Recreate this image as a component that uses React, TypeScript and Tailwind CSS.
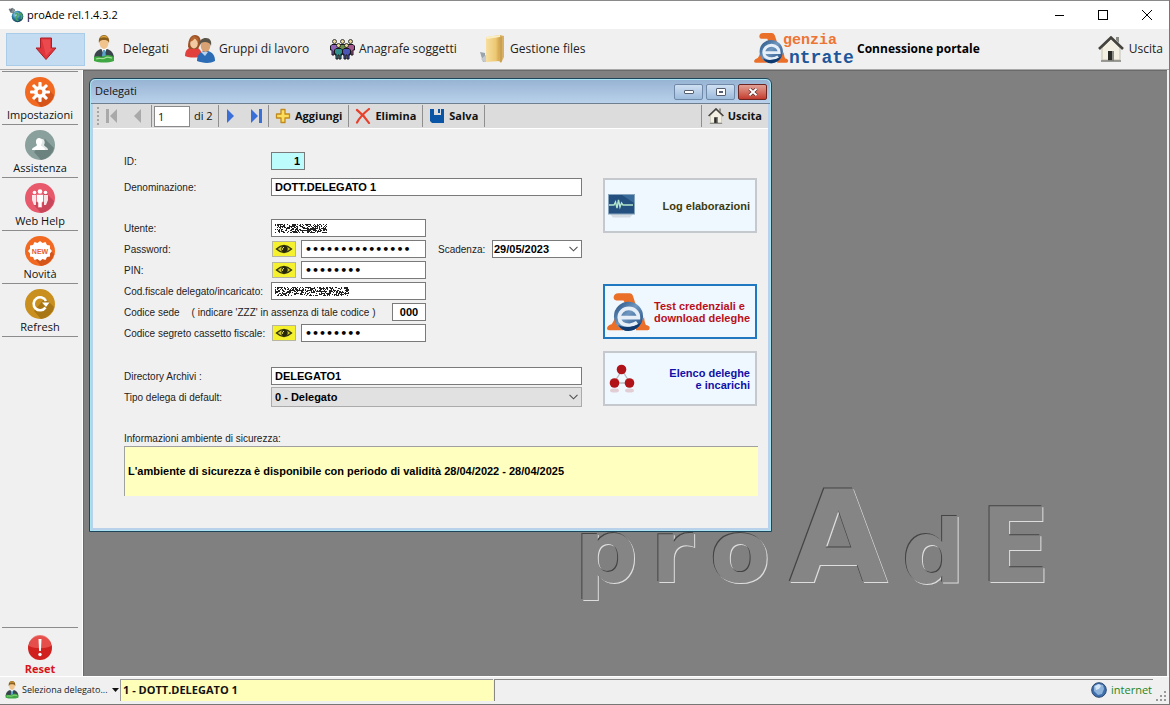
import type { ReactNode } from "react";

/* ---------- icons ---------- */

function GlobeIcon() {
  return (
    <svg viewBox="0 0 16 16" className="size-4">
      <defs>
        <radialGradient id="globe" cx="0.4" cy="0.35" r="0.7">
          <stop offset="0" stopColor="#bfe8f5" />
          <stop offset="0.5" stopColor="#2a7fa8" />
          <stop offset="1" stopColor="#123a4c" />
        </radialGradient>
      </defs>
      <circle cx="9.500" cy="9.500" r="5.800" fill="url(#globe)" />
      <path d="M7 7c2-1 3 0 3 1s-2 1-2 3 2 2 2 3M12 6l2 3-1 3" stroke="#49a35c" strokeWidth="1.600" fill="none" />
      <path d="M1 2h3v2H2zM4 1l3 2-2 3-3-1z" fill="#8c9aa0" stroke="#3e4a50" strokeWidth=".5" />
    </svg>
  );
}

function RedArrowIcon() {
  return (
    <svg viewBox="0 0 22 24" className="h-6 w-[22px]">
      <path d="M5.500 1h11v10H21L11 22.500 1 11h4.500z" fill="#e0353b" stroke="#a82028" strokeWidth="1" />
      <path d="M7 2.500h8v9h2.500L11 19z" fill="#f0595c" opacity=".6" />
    </svg>
  );
}

function DelegateIcon({ className }: { className: string }) {
  return (
    <svg viewBox="0 0 22 28" className={className}>
      <path d="M1 24c0-6 3-9 7-10h6c4 1 7 4 7 10l-3 2H4z" fill="#39444c" />
      <path d="M8 13l3 7 3-7z" fill="#fff" />
      <path d="M10 15h2l1 6-2 2-2-2z" fill="#56a5cf" />
      <path d="M6.500 7c0-4 9-4 9 0 0 4-2 7-4.500 7S6.500 11 6.500 7z" fill="#f1c48d" />
      <path d="M6 8c-1-5 2-8 5-8s6 3 5 8c-1-3-3-3-5-3s-4 0-5 3z" fill="#8a5e1c" />
      <path d="M7 3c2-3 6-3 8 0-3-1-5-1-8 0z" fill="#e0a93c" />
      <path d="M1 22c4-2 7 1 10-1s7-1 10 1v4c-6 2-14 2-20 0z" fill="#3fa842" />
      <path d="M3 24c4-2 6 1 9-1s5 0 7 0" stroke="#a5e09b" strokeWidth="1.200" fill="none" />
    </svg>
  );
}

function GroupIcon() {
  return (
    <svg viewBox="0 0 30 28" className="h-7 w-[30px]">
      <path d="M0 21c0-6 3-8 7-9h4c3 1 6 4 6 9-5 2-12 2-17 0z" fill="#e2413b" />
      <path d="M3 12c0-8 3-12 7-12s7 4 5 10l-2 4H5z" fill="#9a5227" />
      <ellipse cx="9" cy="8.500" rx="3.800" ry="5" fill="#f3c9a1" />
      <path d="M5 7c2-1 4-2 5-4 1 2 2 3 4 4l-1-4-4-2-3 2z" fill="#b5652e" />
      <path d="M12 26c0-6 3-9 7-10h4c4 1 7 4 7 10-5 3-13 2-18 0z" fill="#2b6cb5" />
      <path d="M16 17l4 4 3-4z" fill="#b9d3ee" />
      <ellipse cx="20.500" cy="11" rx="4.800" ry="6" fill="#d9a272" />
      <path d="M15 10c-1-5 2-7 6-7s6 3 5 8c-1-3-3-4-6-4s-4 1-5 3z" fill="#5a5348" />
    </svg>
  );
}

function PeopleIcon() {
  const person = (x: number, y: number, shirt: string) => (
    <g transform={`translate(${x} ${y})`}>
      <path d="M1 5.500h5l1.500 1.500v4H6v5H4v-4H3v4H1v-5H-.5V7z" fill={shirt} stroke="#16161c" strokeWidth="1" />
      <circle cx="3.500" cy="2.500" r="2" fill="#e6d79a" stroke="#16161c" strokeWidth=".8" />
    </g>
  );
  return (
    <svg viewBox="0 0 25 22" className="h-[22px] w-[25px]">
      {person(1, 1, "#8f63b8")}
      {person(17, 1, "#a8588c")}
      {person(9, 1, "#6a8f4a")}
      {person(5, 5, "#2f8f8a")}
      {person(13, 5, "#4a55b5")}
    </svg>
  );
}

function FolderIcon() {
  return (
    <svg viewBox="0 0 26 30" className="h-[30px] w-[26px]">
      <defs>
        <linearGradient id="folder" x1="0" x2="1">
          <stop offset="0" stopColor="#f7dfa0" />
          <stop offset="0.700" stopColor="#ecc872" />
          <stop offset="1" stopColor="#cf9f48" />
        </linearGradient>
      </defs>
      <path d="M0 18l5 1v9H3z" fill="#9aa3ab" />
      <path d="M1 25l6-5v8H4z" fill="#c3c9ce" />
      <path d="M6 3l14-2v26L6 28z" fill="url(#folder)" />
      <path d="M20 1l4 1v21l-3 6-2-2z" fill="#d8b063" />
      <path d="M6 3l14-2v2L7 5z" fill="#fbeec4" />
      <path d="M21 3v25" stroke="#b98c3c" strokeWidth=".8" />
    </svg>
  );
}

function HouseIcon({ className }: { className: string }) {
  return (
    <svg viewBox="0 0 26 26" className={className}>
      <path d="M18 1h3v6l-3-3z" fill="#8b8b86" />
      <path d="M4 12l9-9 9 9v12H4z" fill="#f3efe2" stroke="#b8b4a6" strokeWidth=".8" />
      <path d="M1 13L13 1.500 25 13" fill="none" stroke="#45433e" strokeWidth="2.600" />
      <path d="M10 15h6v9.500h-6z" fill="#2a2a28" />
      <path d="M14 15h2v9h-2z" fill="#8d8d88" />
      <path d="M3 25h20" stroke="#7e7e78" strokeWidth="1.500" />
    </svg>
  );
}

function EntrateEmblem() {
  return (
    <g>
      <defs>
        <linearGradient id="sphere" x1="0" y1="0" x2="1" y2="1">
          <stop offset="0" stopColor="#1c4a7e" />
          <stop offset="0.450" stopColor="#6f97c0" />
          <stop offset="1" stopColor="#123f78" />
        </linearGradient>
      </defs>
      <path d="M20 12Q22 0 34 0h34q8 0 11 10l9 28q-14-12-34-8l-4-8H28q-8 0-8-10z" fill="#ea6f28" />
      <path d="M0 106q2-9 14-12 6-6 10-20 8 22 26 38H6q-6 0-6-6z" fill="#ea6f28" />
      <path d="M86 96q18-6 26-24 2 20 6 24 12 2 11 10-1 6-6 6H88z" fill="#ea6f28" />
      <circle cx="65" cy="70" r="44" fill="url(#sphere)" />
      <path
        d="M37 74h58A29 27 0 0 0 66 46 29 27 0 0 0 37 74q2 24 32 23 12-1 22-8"
        fill="none"
        stroke="#e6eff8"
        strokeWidth="11"
      />
      <path d="M34 96q8 6 26 6 22 0 42-12-8 20-34 24-22 2-34-18z" fill="#0f3a70" />
    </g>
  );
}

function AgenziaEntrateLogo() {
  return (
    <svg viewBox="0 0 100 36" className="h-9 w-[100px]" role="img" aria-label="Agenzia Entrate">
      <g transform="translate(0 2) scale(.265)">
        <EntrateEmblem />
      </g>
      <text x="29" y="13" fill="#ee7434" fontSize="15" fontWeight="700" fontFamily="Liberation Mono, monospace">
        genzia
      </text>
      <text x="35" y="32" fill="#1e5799" fontSize="18" fontWeight="700" fontFamily="Liberation Mono, monospace">
        ntrate
      </text>
    </svg>
  );
}

function Disc({ color, shade, children }: { color: string; shade: string; children: ReactNode }) {
  return (
    <svg viewBox="0 0 30 30" className="size-[30px]">
      <circle cx="15" cy="15" r="15" fill={color} />
      <path d="M20 9l9 9A15 15 0 0 1 16 30l-7-8z" fill={shade} />
      {children}
    </svg>
  );
}

const SPOKES = [0, 45, 90, 135];

function GearDisc() {
  return (
    <Disc color="#f26a21" shade="#d4541a">
      <g fill="#fff">
        {SPOKES.map((deg) => (
          <rect key={deg} x="13.400" y="5" width="3.200" height="20" rx="1" transform={`rotate(${deg} 15 15)`} />
        ))}
        <circle cx="15" cy="15" r="6" />
      </g>
      <circle cx="15" cy="15" r="2.400" fill="#f26a21" />
    </Disc>
  );
}

function SupportDisc() {
  return (
    <Disc color="#8aa09c" shade="#6c827f">
      <g fill="#fff">
        <path d="M15 9c4-1 6 3 4 6 1 2 4 2 4 5h-6z" opacity=".8" />
        <path d="M7 20c0-3 4-3 5-5-2-3-1-7 2-7s4 4 2 7c1 2 4 2 4 5z" />
      </g>
    </Disc>
  );
}

function HelpDisc() {
  return (
    <Disc color="#e8596c" shade="#c9455a">
      <g fill="#fff">
        <circle cx="9.500" cy="9.500" r="1.800" />
        <circle cx="20.500" cy="9.500" r="1.800" />
        <path d="M7 12h4v10H9l-2-5zM23 12h-4v10h2l2-5z" opacity=".85" />
        <circle cx="15" cy="8.500" r="2.300" />
        <path d="M11.500 11.500h7v7l-1.500 1v5h-4v-5l-1.500-1z" stroke="#e8596c" strokeWidth=".6" />
      </g>
    </Disc>
  );
}

function NewDisc() {
  return (
    <Disc color="#f26a21" shade="#d4541a">
      <path
        d="M15 5l2.500 2 3-1 1.500 3 3 .5v3.200L27 15l-2 2.500v3l-3 .5-1.500 3-3-1L15 25l-2.500-2-3 1L8 21l-3-.5v-3L3 15l2-2.300V9.500L8 9l1.500-3 3 1z"
        fill="#fff"
      />
      <text x="15" y="17.500" textAnchor="middle" fontSize="7" fontWeight="700" fill="#e4602a" fontFamily="Liberation Sans, sans-serif">
        NEW
      </text>
    </Disc>
  );
}

function RefreshDisc() {
  return (
    <Disc color="#c9901f" shade="#a87614">
      <path d="M20.500 18.500A6.500 6.500 0 1 1 21 12" fill="none" stroke="#fff" strokeWidth="2.600" />
      <path d="M17 13.500h7.500L21 18z" fill="#fff" />
    </Disc>
  );
}

function ResetIcon() {
  return (
    <svg viewBox="0 0 26 26" className="size-[26px]">
      <circle cx="13" cy="13" r="12" fill="#d0211f" />
      <path d="M2 11a11 11 0 0 1 22 0c-6 3-16 3-22 0z" fill="#ea5a55" opacity=".8" />
      <path d="M11.500 4h3l-.6 12h-1.800z" fill="#fff" />
      <circle cx="13" cy="19.500" r="1.700" fill="#fff" />
    </svg>
  );
}

function PlusIcon() {
  return (
    <svg viewBox="0 0 16 16" className="size-4">
      <path d="M6 1.500h4V6h4.500v4H10v4.500H6V10H1.500V6H6z" fill="#fbdc5c" stroke="#c08a1c" strokeWidth="1.300" strokeLinejoin="round" />
    </svg>
  );
}

function CrossIcon() {
  return (
    <svg viewBox="0 0 16 16" className="size-4">
      <path d="M2 2c4 3 8 7 12 13M14 1C9 5 5 9 2 14.500" fill="none" stroke="#e8402c" strokeWidth="2.200" strokeLinecap="round" />
    </svg>
  );
}

function FloppyIcon() {
  return (
    <svg viewBox="0 0 16 16" className="size-4">
      <path d="M1 1h14v14H3l-2-2z" fill="#0a55a5" />
      <path d="M5 1h7v6H5z" fill="#dcdcdc" />
      <path d="M9 1h2v4H9z" fill="#0a55a5" />
    </svg>
  );
}

function EyeIcon() {
  return (
    <svg viewBox="0 0 18 10" className="h-[10px] w-[18px]">
      <path d="M1.500 5q7.500-7 15 0-7.500 7-15 0z" fill="#c9c42c" stroke="#36360f" strokeWidth="1.400" />
      <circle cx="9.500" cy="5" r="3.200" fill="#26260a" />
      <path d="M9 3.200q-2 .8-1.500 2.600" stroke="#f6f15a" strokeWidth="1" fill="none" />
    </svg>
  );
}

function MonitorIcon() {
  return (
    <svg viewBox="0 0 27 24" className="h-6 w-[27px]">
      <path d="M2 20h23l-3 3.500H5z" fill="#d5dce2" />
      <rect x=".5" y=".5" width="26" height="19.500" fill="#23507f" stroke="#86a4bd" />
      <path d="M14 1h12v8z" fill="#4577a6" opacity=".7" />
      <path d="M1 11h5l1.500-3 1.500 6 1.500-8 1.500 7 1.500-4 1.500 2h10" fill="none" stroke="#b4e6cc" strokeWidth="1.400" />
    </svg>
  );
}

function NodesIcon() {
  return (
    <svg viewBox="0 0 26 30" className="h-[30px] w-[26px]">
      <path d="M13 6L5 19h16z" fill="none" stroke="#b9b9bd" strokeWidth="1.300" />
      <g fill="#b01419">
        <circle cx="12.500" cy="5.500" r="4.800" />
        <circle cx="5.500" cy="19" r="4.800" />
        <circle cx="20.500" cy="19" r="4.800" />
      </g>
      <g fill="#d9a5ab" opacity=".5">
        <ellipse cx="5.500" cy="26.500" rx="4.500" ry="2" />
        <ellipse cx="20.500" cy="26.500" rx="4.500" ry="2" />
      </g>
    </svg>
  );
}

function InternetIcon() {
  return (
    <svg viewBox="0 0 16 16" className="size-4">
      <circle cx="8" cy="8" r="7.300" fill="#3f6fae" stroke="#2b4870" />
      <path d="M3 4l4-2 5 1 1 4-2 5-4 1-4-4z" fill="#8fb4dc" />
      <path d="M4 4l4-2 2 2-2 3-3 1z" fill="#d4e5f5" />
    </svg>
  );
}

function ChevronIcon() {
  return (
    <svg viewBox="0 0 9 6" className="pointer-events-none absolute right-1 top-1/2 h-[6px] w-[9px] -translate-y-1/2">
      <path d="M.5 .8l4 4 4-4" fill="none" stroke="#505050" strokeWidth="1.100" />
    </svg>
  );
}

/** Navigator arrow; `bar` adds the first/last record stop. */
function NavIcon({ color, back, bar }: { color: string; back?: boolean; bar?: boolean }) {
  return (
    <svg viewBox="0 0 14 14" className={back ? "size-[14px] rotate-180" : "size-[14px]"}>
      <path d="M2 0l7 7-7 7z" fill={color} />
      {bar && <path d="M10 0h3v14h-3z" fill={color} />}
    </svg>
  );
}

/** Pixel noise that hides a sensitive value. */
function Scramble({ width }: { width: number }) {
  let seed = 7;
  let d = "";
  for (let y = 0; y < 9; y++) {
    for (let x = 0; x < width; x++) {
      seed = (seed * 1103515245 + 12345) % 2147483648;
      if (seed / 2147483648 > 0.5) d += `M${x} ${y}h1v1h-1z`;
    }
  }
  return (
    <svg viewBox={`0 0 ${width} 9`} width={width} height={9} className="pointer-events-none absolute left-1 top-[5px]">
      <path d={d} fill="#222" />
    </svg>
  );
}

/* ---------- main frame ---------- */

function TitleBar() {
  return (
    <header className="flex h-[29px] shrink-0 items-center border-t border-[#8a8a8a] bg-white pl-2 text-[11px] text-black">
      <GlobeIcon />
      <h1 className="ml-[3px] flex-1">proAde rel.1.4.3.2</h1>
      <button aria-label="Minimize" className="flex h-full w-11 items-center justify-center">
        <span className="h-px w-[9px] bg-black" />
      </button>
      <button aria-label="Maximize" className="flex h-full w-11 items-center justify-center">
        <span className="size-[10px] border border-black" />
      </button>
      <button aria-label="Close" className="flex h-full w-11 items-center justify-center">
        <svg viewBox="0 0 10 10" className="size-[10px]">
          <path d="M0 0l10 10M10 0L0 10" stroke="#000" />
        </svg>
      </button>
    </header>
  );
}

function MainToolbar() {
  return (
    <nav className="flex h-[41px] shrink-0 items-center border-b border-[#a8a8a8] pl-[6px] pr-[6px] text-xs text-[#222]">
      <button aria-label="Riduci menu" className="flex h-[33px] w-[79px] items-center justify-center border border-[#a9cde8] bg-[#c3dcf2]">
        <RedArrowIcon />
      </button>
      <button className="ml-2 flex w-[92px] items-center gap-2">
        <DelegateIcon className="h-7 w-[22px]" />
        Delegati
      </button>
      <button className="flex w-[145px] items-center gap-1">
        <GroupIcon />
        Gruppi di lavoro
      </button>
      <button className="flex w-[150px] items-center gap-1 whitespace-nowrap">
        <PeopleIcon />
        Anagrafe soggetti
      </button>
      <button className="flex items-center gap-1 whitespace-nowrap">
        <FolderIcon />
        Gestione files
      </button>
      <span className="flex-1" />
      <button className="mr-[118px] flex items-center gap-[3px] whitespace-nowrap font-bold text-black">
        <AgenziaEntrateLogo />
        Connessione portale
      </button>
      <button className="flex items-center gap-[5px]">
        <HouseIcon className="size-[26px]" />
        Uscita
      </button>
    </nav>
  );
}

const SIDE_ITEMS = [
  { label: "Impostazioni", icon: <GearDisc /> },
  { label: "Assistenza", icon: <SupportDisc /> },
  { label: "Web Help", icon: <HelpDisc /> },
  { label: "Novità", icon: <NewDisc /> },
  { label: "Refresh", icon: <RefreshDisc /> },
];

function Sidebar() {
  return (
    <aside className="flex w-[83px] shrink-0 flex-col border-r border-white pl-[2px] pr-1 pt-px text-[11px] text-[#111]">
      {SIDE_ITEMS.map(({ label, icon }) => (
        <button key={label} className="flex h-[53px] flex-col items-center border-t border-[#8c8c8c] pt-[5px] leading-[15px]">
          {icon}
          {label}
        </button>
      ))}
      <hr className="border-[#8c8c8c]" />
      <button className="mt-auto flex h-[49px] flex-col items-center border-t border-[#8c8c8c] pt-[7px] font-bold leading-[15px] text-[#d8141c]">
        <ResetIcon />
        Reset
      </button>
    </aside>
  );
}

function StatusBar() {
  return (
    <footer className="flex h-[29px] shrink-0 items-center border-b border-[#777] border-t border-t-white pb-[2px] pl-[5px]">
      <button className="flex w-[115px] items-center gap-[3px] whitespace-nowrap text-[9px] text-[#222]">
        <DelegateIcon className="h-[18px] w-[14px] shrink-0" />
        Seleziona delegato...
        <svg viewBox="0 0 7 4" className="ml-auto mr-px h-1 w-[7px] shrink-0">
          <path d="M0 0h7L3.500 4z" fill="#111" />
        </svg>
      </button>
      <output className="h-[22px] w-[373px] border-l border-t border-[#999] bg-[#ffffb9] pl-[2px] text-[11px] font-bold leading-[20px] text-[#111]">
        1 - DOTT.DELEGATO 1
      </output>
      <div className="ml-px flex h-[22px] flex-1 items-center justify-end gap-1 border-l border-t border-[#888] pr-px text-[11px] text-[#1d851d]">
        <InternetIcon />
        internet
      </div>
      <svg viewBox="0 0 12 12" className="mx-[2px] size-3 self-end">
        <path d="M9 1h2v2H9zM5 5h2v2H5zM9 5h2v2H9zM1 9h2v2H1zM5 9h2v2H5zM9 9h2v2H9z" fill="#999" />
      </svg>
    </footer>
  );
}

/** Embossed product name on the workspace background. */
function Watermark() {
  return (
    <div className="absolute bottom-[74px] right-[104px] flex select-none items-baseline font-['DejaVu_Sans'] text-[88px] font-bold leading-none text-[#858585] [text-shadow:-1px_-1px_0_#444,1px_1px_0_#ddd]">
      <span className="w-[76px]">p</span>
      <span className="w-[59px]">r</span>
      <span className="w-[79px]">o</span>
      <span className="w-[113px] text-[128px]">A</span>
      <span className="w-[78px]">d</span>
      <span className="w-[83px] text-[104px]">E</span>
    </div>
  );
}

/* ---------- Delegati window ---------- */

const FIELD = "h-[18px] min-w-0 border border-[#7a7a7a] bg-white px-[3px] text-[11px] font-bold text-black";

function Row({ label, htmlFor, children }: { label: string; htmlFor: string; children: ReactNode }) {
  return (
    <div className="flex h-[18px] items-center">
      <label htmlFor={htmlFor} className="w-[147px] shrink-0 whitespace-nowrap">
        {label}
      </label>
      {children}
    </div>
  );
}

function SecretField({ id, value }: { id: string; value: string }) {
  return (
    <>
      <button aria-label="Mostra" className="ml-px mr-[5px] flex h-4 w-6 items-center justify-center border border-[#b5b5a0] bg-[#f6f12f]">
        <EyeIcon />
      </button>
      <input id={id} type="password" defaultValue={value} className={`${FIELD} w-[125px] font-['DejaVu_Sans']`} />
    </>
  );
}

const TOOL = "flex h-full items-center gap-1 border-r border-[#8f8f8f] px-[6px] font-bold";

function RecordToolbar() {
  return (
    <div className="flex h-[25px] items-center border-b border-white bg-[#dcdcdc] py-px text-[11px] text-[#111]">
      <span className="ml-1 h-[18px] border-l-2 border-dotted border-[#a5a5a5]" />
      <button aria-label="Primo" className="ml-[6px]">
        <NavIcon color="#a9a9a9" back bar />
      </button>
      <button aria-label="Precedente" className="ml-[10px] mr-2">
        <NavIcon color="#a9a9a9" back />
      </button>
      <span className="h-full border-l border-[#8f8f8f]" />
      <input aria-label="Posizione" defaultValue="1" className="ml-[2px] h-[21px] w-9 border border-[#8a8a8a] bg-white px-[3px]" />
      <span className="w-7 whitespace-nowrap pl-1">di 2</span>
      <span className="h-full border-l border-[#8f8f8f]" />
      <button aria-label="Successivo" className="ml-[6px]">
        <NavIcon color="#3a6fd8" />
      </button>
      <button aria-label="Ultimo" className="ml-[10px] mr-[5px]">
        <NavIcon color="#3a6fd8" bar />
      </button>
      <span className="h-full border-l border-[#8f8f8f]" />
      <button className={TOOL}>
        <PlusIcon />
        Aggiungi
      </button>
      <button className={TOOL}>
        <CrossIcon />
        Elimina
      </button>
      <button className={TOOL}>
        <FloppyIcon />
        Salva
      </button>
      <button className="ml-auto flex h-full items-center gap-1 border-l border-[#8f8f8f] pl-[6px] pr-[6px] font-bold">
        <HouseIcon className="size-4" />
        Uscita
      </button>
    </div>
  );
}

function WindowButtons() {
  const base = "flex h-4 w-[29px] items-center justify-center rounded-[2px] border";
  return (
    <div className="flex gap-[3px]">
      <button aria-label="Riduci" className={`${base} border-[#7089a8] bg-linear-to-b from-[#cfe0f2] to-[#9dbbdc]`}>
        <span className="h-1 w-[10px] rounded-[1px] border border-[#555f70] bg-white" />
      </button>
      <button aria-label="Ingrandisci" className={`${base} border-[#7089a8] bg-linear-to-b from-[#cfe0f2] to-[#9dbbdc]`}>
        <span className="flex h-2 w-[10px] items-center justify-center rounded-[1px] border border-[#555f70] bg-white">
          <span className="h-[2px] w-1 bg-[#555f70]" />
        </span>
      </button>
      <button aria-label="Chiudi" className={`${base} border-[#6b2621] bg-linear-to-b from-[#e2a096] to-[#c23a2c]`}>
        <svg viewBox="0 0 10 8" className="h-2 w-[10px]">
          <path d="M1.500 .8l7 6.400M8.500 .8l-7 6.400" stroke="#5a2a2a" strokeWidth="3.400" />
          <path d="M1.500 .8l7 6.400M8.500 .8l-7 6.400" stroke="#fff" strokeWidth="2" />
        </svg>
      </button>
    </div>
  );
}

const ACTION = "flex h-[55px] items-center justify-between border-2 bg-[#eff7ff] pr-[5px] text-right text-[11px] font-bold leading-3";

function ActionButtons() {
  return (
    <div className="flex w-[154px] flex-col pt-[26px]">
      <button className={`${ACTION} border-[#c5c9cd] pl-[3px] text-[#3c3c10]`}>
        <MonitorIcon />
        Log elaborazioni
      </button>
      <button className={`${ACTION} mt-[51px] border-[#2078c0] pl-[2px] text-[#b8101c]`}>
        <svg viewBox="0 0 130 114" className="h-[38px] w-[43px] shrink-0">
          <EntrateEmblem />
        </svg>
        <span className="whitespace-nowrap text-left">
          Test credenziali e<br />
          download deleghe
        </span>
      </button>
      <button className={`${ACTION} mt-3 border-[#c5c9cd] pl-1 text-[#1010a8]`}>
        <NodesIcon />
        <span>
          Elenco deleghe
          <br />e incarichi
        </span>
      </button>
    </div>
  );
}

function DelegatiForm() {
  return (
    <form className="flex-1 bg-[#f0f0f0] pb-8 pl-[31px] pr-[10px] pt-[23px] font-['Liberation_Sans',Arial,sans-serif] text-[10px] text-[#222]">
      <div className="flex gap-[21px]">
        <div className="flex w-[458px] flex-col gap-[3px]">
          <Row label="ID:" htmlFor="id">
            <input id="id" defaultValue="1" className="h-[18px] w-[34px] border border-[#7a7a7a] bg-[#bdfcfc] px-1 text-right text-[11px] font-bold text-black" />
          </Row>
          <div className="mb-5 mt-[5px]">
            <Row label="Denominazione:" htmlFor="denominazione">
              <input id="denominazione" defaultValue="DOTT.DELEGATO 1" className={`${FIELD} flex-1`} />
            </Row>
          </div>
          <Row label="Utente:" htmlFor="utente">
            <span className="relative flex">
              <input id="utente" className={`${FIELD} w-[155px]`} />
              <Scramble width={52} />
            </span>
          </Row>
          <Row label="Password:" htmlFor="password">
            <SecretField id="password" value="123456789012345" />
            <label htmlFor="scadenza" className="ml-3 flex-1">
              Scadenza:
            </label>
            <span className="relative flex">
              <select id="scadenza" className={`${FIELD} w-[90px] appearance-none px-px`}>
                <option>29/05/2023</option>
              </select>
              <ChevronIcon />
            </span>
          </Row>
          <Row label="PIN:" htmlFor="pin">
            <SecretField id="pin" value="12345678" />
          </Row>
          <Row label="Cod.fiscale delegato/incaricato:" htmlFor="codfiscale">
            <span className="relative flex">
              <input id="codfiscale" className={`${FIELD} w-[155px]`} />
              <Scramble width={74} />
            </span>
          </Row>
          <div className="flex h-[18px] items-center">
            <label htmlFor="sede" className="flex w-[268px] gap-3 whitespace-nowrap">
              <span>Codice sede</span>
              <span>( indicare 'ZZZ' in assenza di tale codice )</span>
            </label>
            <input id="sede" defaultValue="000" className={`${FIELD} w-[34px] text-center`} />
          </div>
          <Row label="Codice segreto cassetto fiscale:" htmlFor="segreto">
            <SecretField id="segreto" value="12345678" />
          </Row>
          <div className="mt-[22px]">
            <Row label="Directory Archivi :" htmlFor="directory">
              <input id="directory" defaultValue="DELEGATO1" className={`${FIELD} flex-1`} />
            </Row>
          </div>
          <Row label="Tipo delega di default:" htmlFor="tipo">
            <span className="relative flex flex-1">
              <select id="tipo" className="h-5 w-full appearance-none border border-[#ababab] bg-[#e1e1e1] px-[3px] text-[11px] font-bold text-black">
                <option>0 - Delegato</option>
              </select>
              <ChevronIcon />
            </span>
          </Row>
        </div>
        <ActionButtons />
      </div>
      <h3 className="mt-[26px] leading-[14px]">Informazioni ambiente di sicurezza:</h3>
      <p className="flex h-[50px] items-center border-l border-t border-[#a0a0a0] bg-[#ffffc0] pl-[3px] text-[11px] font-bold text-black">
        L'ambiente di sicurezza è disponibile con periodo di validità 28/04/2022 - 28/04/2025
      </p>
    </form>
  );
}

function DelegatiWindow() {
  return (
    <section className="absolute left-[5px] top-[7px] flex w-[683px] flex-col rounded-t-md border border-[#1f4658] bg-[#b9d1ea] px-[3px] pb-[3px] shadow-[inset_0_0_0_1px_#a8e4f4]">
      <header className="-mx-[2px] mt-px flex h-6 items-center justify-between rounded-t-[5px] border-b border-[#6f7f90] bg-linear-to-b from-[#98b4d4] to-[#b9d1ea] pl-1 pr-[3px] text-[11px] text-[#111]">
        <h2>Delegati</h2>
        <WindowButtons />
      </header>
      <RecordToolbar />
      <DelegatiForm />
    </section>
  );
}

export default function App() {
  return (
    <div className="flex h-screen min-h-[600px] flex-col border-r border-[#777] bg-[#f0f0f0] font-['Open_Sans','Noto_Sans',sans-serif]">
      <TitleBar />
      <MainToolbar />
      <div className="flex min-h-0 flex-1">
        <Sidebar />
        <main className="relative mr-[2px] flex-1 overflow-hidden border-l border-t border-[#6a6a6a] bg-[#808080]">
          <Watermark />
          <DelegatiWindow />
        </main>
      </div>
      <StatusBar />
    </div>
  );
}
